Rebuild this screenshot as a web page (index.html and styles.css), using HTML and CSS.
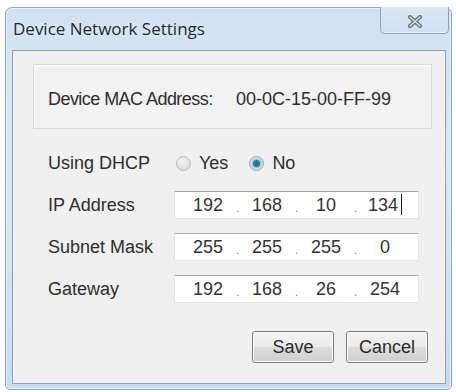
FILE: index.html
```html
<!DOCTYPE html>
<html lang="en">
<head>
    <meta charset="UTF-8">
    <meta name="viewport" content="width=device-width, initial-scale=1.0">
    <title>Device Network Settings</title>
    <link rel="stylesheet" href="styles.css">
</head>
<body>
    <div class="window">
        <div class="titlebar">
            <span class="title">Device Network Settings</span>
            <button class="close-btn">
                <svg width="16" height="13" viewBox="0 0 16 13">
                    <path d="M3 2 L13 11 M13 2 L3 11" stroke="#6c7683" stroke-width="4.2" stroke-linecap="round" fill="none"/>
                    <path d="M3 2 L13 11 M13 2 L3 11" stroke="#d7dde4" stroke-width="1.4" stroke-linecap="round" fill="none"/>
                </svg>
            </button>
        </div>
        <div class="client">
            <div class="mac-box">
                <span class="mac-label">Device MAC Address:</span>
                <span class="mac-value">00-0C-15-00-FF-99</span>
            </div>
            <div class="form">
                <div class="row">
                    <span class="label">Using DHCP</span>
                    <label class="radio"><span class="circle"></span>Yes</label>
                    <label class="radio radio-no"><span class="circle checked"></span>No</label>
                </div>
                <div class="row">
                    <span class="label">IP Address</span>
                    <div class="ip-box">
                        <span class="seg">192</span><span class="sep">.</span>
                        <span class="seg">168</span><span class="sep">.</span>
                        <span class="seg">10</span><span class="sep">.</span>
                        <span class="seg">134<span class="caret"></span></span>
                    </div>
                </div>
                <div class="row">
                    <span class="label">Subnet Mask</span>
                    <div class="ip-box">
                        <span class="seg">255</span><span class="sep">.</span>
                        <span class="seg">255</span><span class="sep">.</span>
                        <span class="seg">255</span><span class="sep">.</span>
                        <span class="seg">0</span>
                    </div>
                </div>
                <div class="row">
                    <span class="label">Gateway</span>
                    <div class="ip-box">
                        <span class="seg">192</span><span class="sep">.</span>
                        <span class="seg">168</span><span class="sep">.</span>
                        <span class="seg">26</span><span class="sep">.</span>
                        <span class="seg">254</span>
                    </div>
                </div>
            </div>
            <div class="buttons">
                <button class="btn">Save</button>
                <button class="btn">Cancel</button>
            </div>
        </div>
    </div>
</body>
</html>
```

FILE: styles.css
```css
*{
    margin:0;
    padding:0;
    box-sizing:border-box;
}
body{
    background-color:#ffffff;
    font-family:"Liberation Sans",Arial,sans-serif;
    color:#2e2e2e;
}
.window{
    width:447px;
    height:383px;
    margin:7px 0 0 5px;
    border:1px solid #8fa4bb;
    border-radius:7px 7px 5px 5px;
    background:linear-gradient(to bottom,#cfe1f3 0%,#d9e8f6 40%,#c9dcef 100%);
    box-shadow:inset 0 0 0 1px #e6f0fa;
    display:flex;
    flex-direction:column;
}
.titlebar{
    height:42px;
    display:flex;
    align-items:flex-start;
    justify-content:space-between;
}
.title{
    font-family:"Open Sans",sans-serif;
    font-size:17px;
    color:#1f2a33;
    margin:9px 0 0 7px;
    text-shadow:0 0 6px #eef5fc;
}
.close-btn{
    width:69px;
    height:27px;
    margin:-1px 2px 0 0;
    border:1px solid #8fa3b9;
    border-top:none;
    border-radius:0 0 5px 5px;
    background:linear-gradient(to bottom,#dce9f6,#cddff1);
    box-shadow:inset 0 -1px 0 #eaf2fa;
    display:flex;
    align-items:center;
    justify-content:center;
    padding-top:2px;
}
.client{
    flex:1;
    margin:0 5px 5px 6px;
    border:1px solid #93a3b4;
    background-color:#f0f0f0;
    display:flex;
    flex-direction:column;
}
.mac-box{
    height:65px;
    margin:13px 13px 0 20px;
    border:1px solid #dadada;
    box-shadow:inset 1px 1px 0 #fafafa;
    background-color:#f2f2f2;
    display:flex;
    align-items:center;
    padding:6px 0 0 14px;
    font-size:18px;
}
.mac-label{
    letter-spacing:-0.55px;
    width:188px;
}
.form{
    margin-top:13px;
    padding-left:35px;
}
.row{
    height:42px;
    display:flex;
    align-items:center;
    font-size:18px;
}
.label{
    width:126px;
}
.radio{
    display:flex;
    align-items:center;
    gap:8px;
    margin-left:2px;
}
.radio-no{
    margin-left:21px;
}
.circle{
    width:15px;
    height:15px;
    border-radius:50%;
    border:1px solid #bcbcbc;
    background:radial-gradient(circle at 40% 35%,#f4f4f4,#d2d2d2);
}
.circle.checked{
    border-color:#8aa7bb;
    background:radial-gradient(circle,#1c6a86 0%,#2f86a6 35%,#a9c6d6 45%,#e4eef4 75%);
}
.ip-box{
    width:245px;
    height:28px;
    background-color:#ffffff;
    border:1px solid #e2e6ea;
    border-top:1px solid #a9abaf;
    display:flex;
    align-items:center;
    padding-left:7px;
    color:#333333;
}
.seg{
    width:52px;
    text-align:center;
}
.sep{
    width:7px;
    text-align:center;
    font-size:13px;
    color:#8c8c8c;
    padding-top:5px;
}
.caret{
    display:inline-block;
    width:1px;
    height:21px;
    background-color:#111111;
    vertical-align:-4px;
    margin-left:3px;
}
.buttons{
    margin-top:21px;
    padding-right:17px;
    display:flex;
    justify-content:flex-end;
    gap:12px;
}
.btn{
    width:82px;
    height:32px;
    border:1px solid #7d7d7d;
    border-radius:3px;
    background:linear-gradient(to bottom,#f4f4f4 0%,#ececec 48%,#dddddd 52%,#d0d0d0 100%);
    box-shadow:inset 0 0 0 1px #fbfbfb;
    font-family:"Liberation Sans",Arial,sans-serif;
    font-size:18px;
    color:#2a2a2a;
}
```
